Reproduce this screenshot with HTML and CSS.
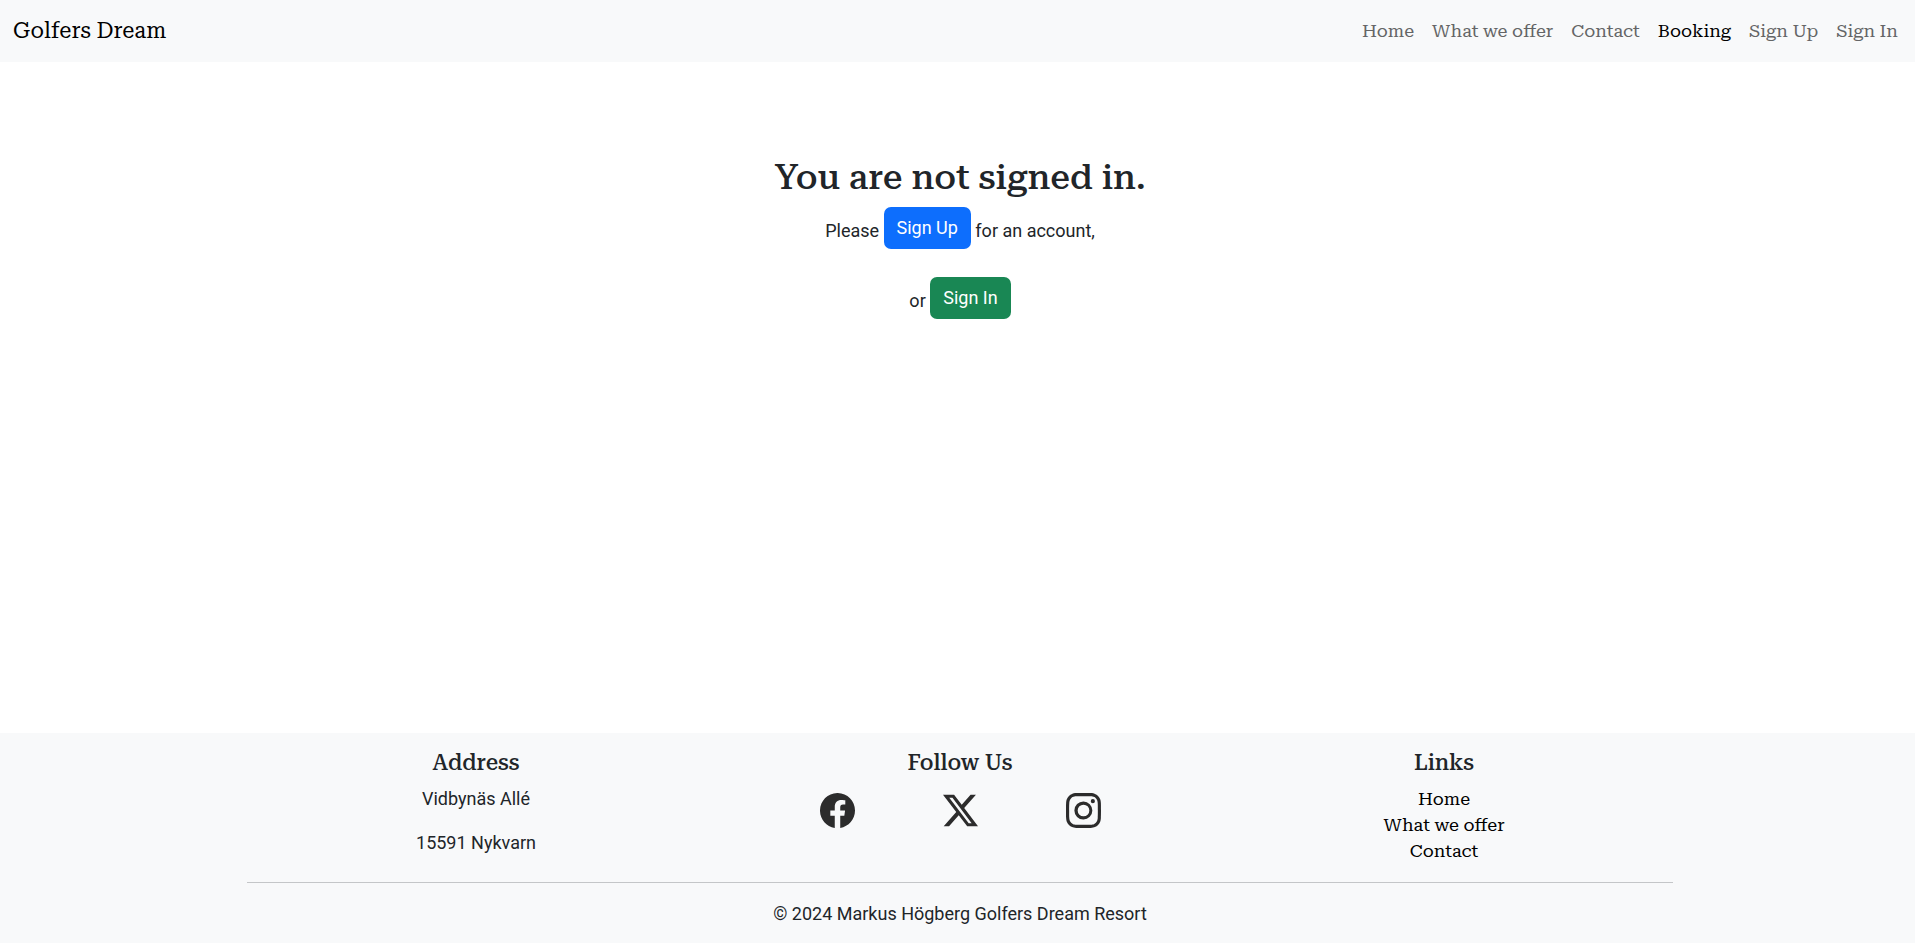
FILE: index.html
```html
<!DOCTYPE html>
<html lang="en">
<head>
<meta charset="utf-8">
<meta name="viewport" content="width=device-width, initial-scale=1">
<title>Golfers Dream</title>
<link rel="stylesheet" href="styles.css">
</head>
<body>
<header class="navbar">
  <a class="brand" href="#">Golfers Dream</a>
  <nav class="nav" aria-label="Main">
    <a href="#">Home</a>
    <a href="#">What we offer</a>
    <a href="#">Contact</a>
    <a class="active" href="#" aria-current="page">Booking</a>
    <a href="#">Sign Up</a>
    <a href="#">Sign In</a>
  </nav>
</header>
<main class="main">
  <h1 class="title">You are not signed in.</h1>
  <p class="line">Please <a class="btn btn-primary" href="#">Sign Up</a> for an account,</p>
  <p class="line">or <a class="btn btn-success" href="#">Sign In</a></p>
</main>
<footer class="footer">
  <div class="footer-inner">
    <div class="columns">
      <section class="column">
        <h2 class="heading">Address</h2>
        <p class="address">Vidbynäs Allé</p>
        <p class="address">15591 Nykvarn</p>
      </section>
      <section class="column">
        <h2 class="heading">Follow Us</h2>
        <div class="social">
          <a href="#" aria-label="Facebook"><svg viewBox="0 0 16 16"><path d="M16 8.049c0-4.446-3.582-8.05-8-8.05C3.58 0-.002 3.603-.002 8.05c0 4.017 2.926 7.347 6.75 7.951v-5.625h-2.03V8.05H6.75V6.275c0-2.017 1.195-3.131 3.022-3.131.876 0 1.791.157 1.791.157v1.98h-1.009c-.993 0-1.303.621-1.303 1.258v1.51h2.218l-.354 2.326H9.25V16c3.824-.604 6.75-3.934 6.75-7.951"/></svg></a>
          <a href="#" aria-label="X"><svg viewBox="0 0 16 16"><path d="M12.6.75h2.454l-5.36 6.142L16 15.25h-4.937l-3.867-5.07-4.425 5.07H.316l5.733-6.57L0 .75h5.063l3.495 4.633L12.601.75Zm-.86 13.028h1.36L4.323 2.145H2.865z"/></svg></a>
          <a href="#" aria-label="Instagram"><svg viewBox="0 0 16 16"><path d="M8 0C5.829 0 5.556.01 4.703.048 3.85.088 3.269.222 2.76.42a3.900 3.900 0 0 0-1.417.923A3.900 3.900 0 0 0 .42 2.760C.222 3.268.087 3.850.048 4.700.010 5.555 0 5.827 0 8.001c0 2.172.010 2.444.048 3.297.040.852.174 1.433.372 1.942.205.526.478.972.923 1.417.444.445.890.719 1.416.923.510.198 1.090.333 1.942.372C5.555 15.990 5.827 16 8 16s2.444-.010 3.298-.048c.851-.040 1.434-.174 1.943-.372a3.900 3.900 0 0 0 1.416-.923c.445-.445.718-.891.923-1.417.197-.509.332-1.090.372-1.942C15.990 10.445 16 10.173 16 8s-.010-2.445-.048-3.299c-.040-.851-.175-1.433-.372-1.941a3.900 3.900 0 0 0-.923-1.417A3.900 3.900 0 0 0 13.240.420c-.510-.198-1.092-.333-1.943-.372C10.443.010 10.172 0 7.998 0zm-.717 1.442h.718c2.136 0 2.389.007 3.232.046.780.035 1.204.166 1.486.275.373.145.640.319.920.599s.453.546.598.920c.110.281.240.705.275 1.485.039.843.047 1.096.047 3.231s-.008 2.389-.047 3.232c-.035.780-.166 1.203-.275 1.485a2.470 2.470 0 0 1-.599.919c-.280.280-.546.453-.920.598-.280.110-.704.240-1.485.276-.843.038-1.096.047-3.232.047s-2.390-.009-3.233-.047c-.780-.036-1.203-.166-1.485-.276a2.480 2.480 0 0 1-.920-.598 2.480 2.480 0 0 1-.600-.920c-.109-.281-.240-.705-.275-1.485-.038-.843-.046-1.096-.046-3.233s.008-2.388.046-3.231c.036-.780.166-1.204.276-1.486.145-.373.319-.640.599-.920s.546-.453.920-.598c.282-.110.705-.240 1.485-.276.738-.034 1.024-.044 2.515-.045zm4.988 1.328a.960.960 0 1 0 0 1.920.960.960 0 0 0 0-1.920m-4.270 1.122a4.109 4.109 0 1 0 0 8.217 4.109 4.109 0 0 0 0-8.217m0 1.441a2.667 2.667 0 1 1 0 5.334 2.667 2.667 0 0 1 0-5.334"/></svg></a>
        </div>
      </section>
      <section class="column">
        <h2 class="heading">Links</h2>
        <ul class="links">
          <li><a href="#">Home</a></li>
          <li><a href="#">What we offer</a></li>
          <li><a href="#">Contact</a></li>
        </ul>
      </section>
    </div>
    <hr class="rule">
    <p class="copyright">© 2024 Markus Högberg Golfers Dream Resort</p>
  </div>
</footer>
</body>
</html>
```
FILE: styles.css
```css
*, *::before, *::after {
  box-sizing: border-box;
}

:root {
  --serif: "Roboto Serif", "DejaVu Serif Condensed", "DejaVu Serif", serif;
  --sans: Roboto, "Liberation Sans", sans-serif;
}

body {
  display: flex;
  flex-direction: column;
  min-height: 100vh;
  margin: 0;
  background: #fff;
  color: #212529;
  font: 18px/26px var(--sans);
}

h1, h2, p, ul {
  margin: 0;
}

a {
  color: inherit;
  text-decoration: none;
}

.navbar {
  display: flex;
  align-items: center;
  justify-content: space-between;
  padding: 9px 17px 9px 13px;
  background: #f8f9fa;
  font-family: var(--serif);
}

.brand {
  color: #000;
  font-size: 22px;
  line-height: 44px;
}

.nav {
  display: flex;
  gap: 18px;
  color: #646566;
}

.nav .active {
  color: #000;
}

.main {
  flex: 1;
  padding: 95px 0 0 5px;
  text-align: center;
}

.title {
  margin-bottom: 8px;
  font: 500 35px/42px var(--serif);
}

.line {
  margin-bottom: 19px;
}

.btn {
  display: inline-block;
  margin-bottom: 9px;
  padding: 7px 12px;
  border: 1px solid transparent;
  border-radius: 7px;
  color: #fff;
  vertical-align: middle;
}

.btn-primary {
  background: #0d6efd;
}

.btn-success {
  background: #198754;
}

.footer {
  padding: 17px 0 16px 5px;
  background: #f8f9fa;
  text-align: center;
}

.footer-inner {
  width: 76%;
  max-width: 1426px;
  margin: 0 auto;
}

.columns {
  display: grid;
  grid-template-columns: repeat(3, 1fr);
  gap: 26px;
}

.heading {
  margin-bottom: 10px;
  font: 500 22px/26px var(--serif);
}

.address {
  margin-bottom: 18px;
}

.social {
  display: grid;
  grid-template-columns: repeat(3, 1fr);
  justify-items: center;
  max-width: 369px;
  margin: 0 auto;
  padding-top: 7px;
}

.social a, .social svg {
  display: block;
  width: 35px;
  height: 35px;
  fill: #2c2c2c;
}

.links {
  padding: 0;
  list-style: none;
  color: #000;
  font-family: var(--serif);
}

.rule {
  margin: 8px 0 18px;
  border: 0;
  border-top: 1px solid #c4c6c8;
}
```
